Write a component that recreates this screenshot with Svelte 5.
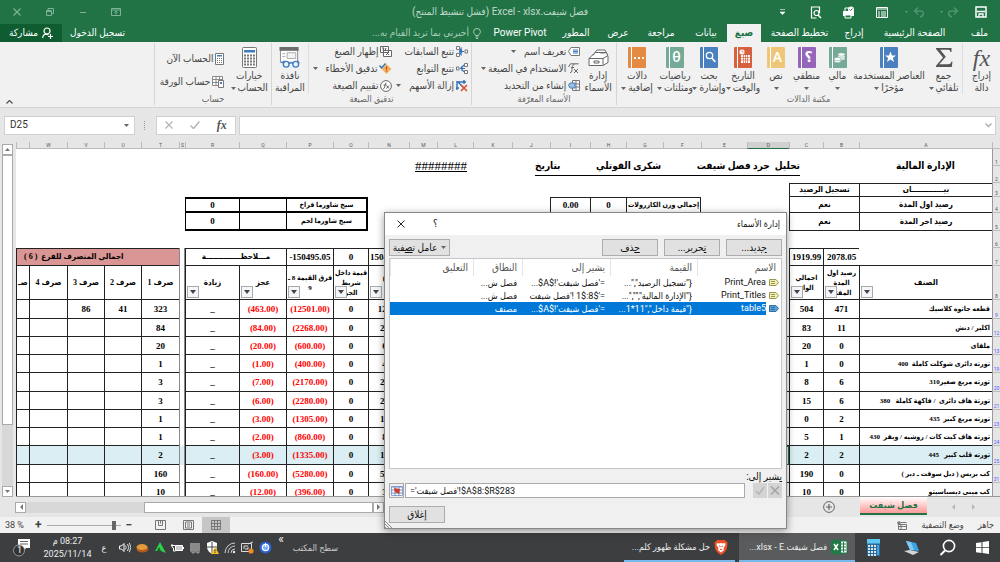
<script lang="ts">
  interface Column {
    id: string;
    width: number;
  }

  interface Item {
    name: string;
    opening: string;
    incoming: string;
    sales: string;
    diff: string;
    short: string;
    out: string[];
    current?: boolean;
    row?: number;
  }

  const columns: Column[] = [
    { id: '', width: 8 },
    { id: 'A', width: 133 },
    { id: 'B', width: 36 },
    { id: 'C', width: 34 },
    { id: 'D', width: 42 },
    { id: 'E', width: 46 },
    { id: 'F', width: 38 },
    { id: 'G', width: 37 },
    { id: 'H', width: 36 },
    { id: 'I', width: 40 },
    { id: 'J', width: 38 },
    { id: 'K', width: 39 },
    { id: 'L', width: 36 },
    { id: 'M', width: 28 },
    { id: 'N', width: 41 },
    { id: 'O', width: 35 },
    { id: 'P', width: 47 },
    { id: 'Q', width: 47 },
    { id: 'R', width: 54 },
    { id: 'S', width: 6 },
    { id: 'T', width: 38 },
    { id: 'U', width: 37 },
    { id: 'V', width: 37 },
    { id: 'W', width: 38 },
    { id: '', width: 13 }
  ];
  const totalWidth = columns.reduce((sum, c) => sum + c.width, 0);

  const items: Item[] = [
    { row: 9, name: 'قطعه جاتوه كلاسيك', opening: '471', incoming: '504', sales: '12501', diff: '(12501.00)', short: '(463.00)', out: ['323', '41', '86'] },
    { row: 12, name: 'اكلير / دنش', opening: '11', incoming: '83', sales: '2268', diff: '(2268.00)', short: '(84.00)', out: ['84', '', ''] },
    { row: 13, name: 'ملفاى', opening: '0', incoming: '20', sales: '600', diff: '(600.00)', short: '(20.00)', out: ['20', '', ''] },
    { row: 19, name: 'تورته دائرى شوكلت كاملة  400', opening: '0', incoming: '1', sales: '400', diff: '(400.00)', short: '(1.00)', out: ['1', '', ''] },
    { row: 20, name: 'تورته مربع صغير310', opening: '6', incoming: '8', sales: '2170', diff: '(2170.00)', short: '(7.00)', out: ['3', '', ''] },
    { row: 21, name: 'تورتة هاف دائرى  / فاكهة كاملة   380', opening: '6', incoming: '15', sales: '2280', diff: '(2280.00)', short: '(6.00)', out: ['3', '', ''] },
    { row: 23, name: 'تورته مربع كبير  435', opening: '2', incoming: '0', sales: '1305', diff: '(1305.00)', short: '(3.00)', out: ['1', '', ''] },
    { row: 24, name: 'تورته هاف كيت كات / روشيه / ويفر  430', opening: '1', incoming: '5', sales: '860', diff: '(860.00)', short: '(2.00)', out: ['1', '', ''] },
    { row: 25, name: 'تورته قلب كبير   445', opening: '2', incoming: '2', sales: '1335', diff: '(1335.00)', short: '(3.00)', out: ['2', '', ''], current: true },
    { row: 31, name: 'كب بريس ( دبل سوفت ـ دبر )', opening: '0', incoming: '190', sales: '5280', diff: '(5280.00)', short: '(160.00)', out: ['160', '', ''] },
    { name: 'كب مينى ديسباسيتو', opening: '0', incoming: '10', sales: '396', diff: '(396.00)', short: '(12.00)', out: ['10', '', ''] }
  ];

  const tabs = ['ملف', 'الصفحة الرئيسية', 'إدراج', 'تخطيط الصفحة', 'صيغ', 'بيانات', 'مراجعة', 'عرض', 'المطور', 'Power Pivot'];
  let activeTab = $state('صيغ');

  const books = [
    { kind: 'star', color: '#4a80bd', lines: ['العناصر المستخدمة', 'مؤخرًا'] },
    { kind: 'coins', color: '#75aa97', lines: ['مالي', ''] },
    { kind: '؟', color: '#9465b8', lines: ['منطقي', ''] },
    { kind: 'A', color: '#efc577', lines: ['نص', ''] },
    { kind: 'date', color: '#d8603f', lines: ['التاريخ', 'والوقت'] },
    { kind: 'find', color: '#4a80bd', lines: ['بحث', 'وإشارة'] },
    { kind: 'θ', color: '#75aa97', lines: ['رياضيات', 'ومثلثات'] },
    { kind: 'dots', color: '#e58a42', lines: ['دالات', 'إضافية'] }
  ];

  // \u2066 and \u2069 keep the row range together inside the right-to-left cell
  const names = [
    { name: 'Print_Area', value: '{"تسجيل الرصيد","...', refers: "='فصل شيفت'!$A$...", scope: 'فصل ش...' },
    { name: 'Print_Titles', value: '{"الإدارة المالية","","...', refers: "='\u20661$:8$\u2069 !'فصل شيفت", scope: 'فصل ش...' },
    { name: 'table5', value: '{"قيمة داخل","11*1...', refers: "='فصل شيفت'!$A$...", scope: 'مصنف' }
  ];
  let selected = $state('table5');
  let refersTo = $state("='فصل شيفت'!$A$8:$R$283");
  let cellName = $state('D25');
  let formula = $state('');
  let zoom = $state(38);
</script>

{#snippet caret()}
  <svg class="caret" width="5" height="3" viewBox="0 0 5 3"><path d="M0 0h5L2.500 3z" fill="#666" /></svg>
{/snippet}

{#snippet book(kind: string, color: string)}
  <svg width="18" height="21" viewBox="0 0 18 21">
    <rect width="18" height="21" rx="1" fill={color} />
    <path d="M3.500 0v21" stroke="#fff" stroke-width="1" />
    {#if kind === 'star'}
      <path d="M10.500 4.500l1.500 4h4l-3.200 2.500 1.200 4-3.500-2.400L7 15l1.200-4L5 8.500h4z" fill="#fff" />
    {:else if kind === 'coins'}
      <g fill="#fff" stroke={color} stroke-width=".6">
        <ellipse cx="12.500" cy="11.500" rx="3.500" ry="1.700" /><ellipse cx="12.500" cy="9.500" rx="3.500" ry="1.700" />
        <ellipse cx="12.500" cy="7.500" rx="3.500" ry="1.700" /><ellipse cx="8.500" cy="14" rx="3.500" ry="1.700" />
        <ellipse cx="8.500" cy="12" rx="3.500" ry="1.700" />
      </g>
    {:else if kind === 'date'}
      <path d="M7 8h9v8H7z" fill="#fff" />
      <path d="M9.500 8v8M11.500 8v8M13.500 8v8M7 10.500h9M7 13h9" stroke={color} stroke-width=".7" />
      <circle cx="8" cy="5" r="2.800" fill="#fff" stroke={color} stroke-width=".5" />
      <path d="M8 3.500V5h1.500" stroke={color} stroke-width=".7" fill="none" />
    {:else if kind === 'find'}
      <circle cx="9.500" cy="8.500" r="3.200" fill="none" stroke="#fff" stroke-width="1.300" />
      <path d="M11.800 11l3.500 4" stroke="#fff" stroke-width="1.700" />
    {:else if kind === 'dots'}
      <path d="M6 10h2v2H6zM10 10h2v2h-2zM14 10h2v2h-2z" fill="#fff" />
    {:else}
      <text x="10.500" y="15" text-anchor="middle" font-size="14" font-weight="600" fill="#fff" font-family="Open Sans, DejaVu Sans, sans-serif">{kind}</text>
    {/if}
  </svg>
{/snippet}

{#snippet filter()}
  <button class="filter" aria-label="تصفية"><svg width="6" height="4" viewBox="0 0 6 4"><path d="M0 0h6L3 4z" fill="#444" /></svg></button>
{/snippet}

<div class="window" dir="rtl">
  <header>
    <div class="titlebar">
      <div class="quick">
        <button aria-label="حفظ"><svg width="12" height="12" viewBox="0 0 12 12"><path d="M1 1h10v10H1z" fill="none" stroke="#fff" stroke-width="1.500" /><path d="M2 5.500h8M4 11V8h4v3" stroke="#fff" stroke-width="1.300" fill="none" /></svg></button>
        <button aria-label="إعادة"><svg width="22" height="12" viewBox="0 0 22 12"><path d="M3 5h3L4.500 7z" fill="#5f9f7c" /><path d="M20 5h-5c-5 0-4 5 0 6M17 1.500L20.500 5 17 8.500" fill="none" stroke="#4f9570" stroke-width="1.400" /></svg></button>
        <button aria-label="تراجع"><svg width="22" height="12" viewBox="0 0 22 12"><path d="M1 5h3L2.500 7z" fill="#5f9f7c" /><path d="M11 5h5c5 0 4 5 0 6M14 1.500L10.500 5 14 8.500" fill="none" stroke="#4f9570" stroke-width="1.400" /></svg></button>
        <button aria-label="نموذج"><svg width="12" height="11" viewBox="0 0 12 11"><path d="M.5.500h11v10H.5z" fill="none" stroke="#fff" /><path d="M0 2h12M2 5h2M5 5h5M2 7h2M5 7h5M2 9h2M5 9h5" stroke="#fff" /></svg></button>
        <button aria-label="طباعة سريعة"><svg width="13" height="13" viewBox="0 0 13 13"><path d="M1 5h11v5H1z" fill="#fff" /><path d="M3 5V2h4M3 9h6v3H3z" fill="#217346" stroke="#fff" /><circle cx="9" cy="3.500" r="3" fill="#fff" /><path d="M7.500 3.500l1 1 2-2" stroke="#217346" fill="none" /></svg></button>
        <button aria-label="معاينة"><svg width="12" height="13" viewBox="0 0 12 13"><path d="M9.500 7V1H1.500v11h5" fill="none" stroke="#fff" stroke-width="1.200" /><circle cx="6.500" cy="7" r="2.500" fill="none" stroke="#fff" stroke-width="1.200" /><path d="M8 9l3 3" stroke="#fff" stroke-width="1.500" /></svg></button>
        <button aria-label="تخصيص"><svg width="5" height="6" viewBox="0 0 5 6"><path d="M0 .5h5M0 3h5L2.500 5.500z" stroke="#fff" stroke-width=".6" fill="#fff" /></svg></button>
      </div>
      <h1>فصل شيفت.xlsx -&rlm; Excel (فشل تنشيط المنتج)</h1>
      <div class="controls">
        <button aria-label="خيارات الشريط"><svg width="10" height="8" viewBox="0 0 10 8"><path d="M.5.500h9v7h-9zM.5 2h9M5 6.500V3.500M3.500 4.500L5 3l1.500 1.500" fill="none" stroke="#7fb396" /></svg></button>
        <button aria-label="تصغير"><svg width="8" height="8" viewBox="0 0 8 8"><path d="M1 4.500h6" stroke="#7fb396" /></svg></button>
        <button aria-label="استعادة"><svg width="8" height="8" viewBox="0 0 8 8"><path d="M.5 2.500h5v5h-5zM2 2V.5h5.500v5H6M.5 3.500h5" fill="none" stroke="#7fb396" /></svg></button>
        <button aria-label="إغلاق"><svg width="8" height="8" viewBox="0 0 8 8"><path d="M.5.500l7 7M7.500.500l-7 7" stroke="#7fb396" stroke-width="1.200" /></svg></button>
      </div>
    </div>
    <nav class="tabs">
      {#each tabs as tab}
        <button class:active={tab === activeTab} onclick={() => (activeTab = tab)}>{tab}</button>
      {/each}
      <button class="tell">
        <svg width="8" height="11" viewBox="0 0 8 11"><path d="M2.500 7.500C2 6 .6 5.500.6 3.600a3.400 3.100 0 0 1 6.800 0C7.400 5.500 6 6 5.500 7.500zM2.500 9h3M3 10.500h2" fill="none" stroke="#b5d3c2" stroke-width=".9" /></svg>
        أخبرني بما تريد القيام به...
      </button>
      <button class="sign">تسجيل الدخول</button>
      <button class="share">
        <svg width="11" height="12" viewBox="0 0 11 12"><circle cx="5" cy="4" r="3" fill="none" stroke="#fff" stroke-width="1.200" /><path d="M.6 11C1 8.500 2.500 7.200 4.500 7.200L6.500 8M8.500 7v5M6 9.500h5" fill="none" stroke="#fff" stroke-width="1.200" /></svg>
        مشاركة
      </button>
    </nav>
  </header>

  <section class="ribbon">
    <div class="group library">
      <div class="tools">
        <button class="big">
          <span class="fx">fx</span>
          <span>إدراج</span><span>دالة</span>
        </button>
        <button class="big edge">
          <svg width="18" height="21" viewBox="0 0 18 21"><path d="M1 1h15.500v4h-1c-.3-1.800-1-2.300-3-2.300H5.200l5.600 7.100-6.500 7.500h8.500c2.200 0 3-.6 3.700-2.700h1L16.800 20H1v-1.200l7-8.300-7-8.600z" fill="#555" /></svg>
          <span>جمع</span><span>تلقائي {@render caret()}</span>
        </button>
        {#each books as b}
          <button class="big">
            {@render book(b.kind, b.color)}
            <span>{b.lines[0]}</span><span>{b.lines[1]} {@render caret()}</span>
          </button>
        {/each}
      </div>
      <div class="caption">مكتبة الدالات</div>
    </div>

    <div class="group names">
      <div class="tools">
        <button class="big">
          <svg width="21" height="20" viewBox="0 0 21 20"><path d="M1 11l5-5h13l1 3v6l-5 3H1z" fill="#fff" stroke="#666" /><path d="M1 11h14v7M15 11l5-3M5 8l2-3h11M7 5l2-2.500h8l2 4" fill="#fff" stroke="#666" /><path d="M6 13.500h5v2H6z" fill="none" stroke="#666" /></svg>
          <span>إدارة</span><span>الأسماء</span>
        </button>
        <div class="stack">
          <button><svg width="12" height="11" viewBox="0 0 12 11"><path d="M.5 5.500L3 1.500h8.500v8H3z" fill="#fff" stroke="#777" /><path d="M5 4h5M5 5.500h5M5 7h5" stroke="#3f7cbf" /></svg>تعريف اسم <i>{@render caret()}</i></button>
          <button><svg width="12" height="11" viewBox="0 0 12 11"><path d="M.5 4L2.500.8h8M6.500 1.500c-2-.5-2 2-2.500 5 0 2-.5 3.500-2 3M3 4.500h3M6 6l4 4M10 6l-4 4" fill="none" stroke="#666" /></svg>الاستخدام في الصيغة {@render caret()}</button>
          <button><svg width="12" height="11" viewBox="0 0 12 11"><path d="M4.500.500h7v10h-7zM4.500 4h7M4.500 7h7M8 .5v10" fill="#fff" stroke="#777" /><path d="M.5 5L2 3h5v5H2z" fill="#9dbfe2" stroke="#4a7fb8" /></svg>إنشاء من التحديد</button>
        </div>
      </div>
      <div class="caption">الأسماء المعرّفة</div>
    </div>

    <div class="group audit">
      <div class="tools">
        <div class="stack">
          <button><svg width="12" height="11" viewBox="0 0 12 11"><path d="M.5.500h3v3h-3zM.5 7.500h3v3h-3zM9 4h2.500v3H9z" fill="#fff" stroke="#777" /><path d="M8 5.500H4M5.500 3.500v4M5.500 1.500L3.500 5.500l2 4" stroke="#2f6fb5" stroke-width="1.200" fill="none" /></svg>تتبع السابقات</button>
          <button><svg width="12" height="11" viewBox="0 0 12 11"><path d="M8.500.500h3v3h-3zM8.500 7.500h3v3h-3zM.5 4H3v3H.5z" fill="#fff" stroke="#777" /><path d="M8 2L5 5l3 4M6 3v5M4 5.500h5" stroke="#2f6fb5" stroke-width="1.200" fill="none" /></svg>تتبع التوابع</button>
          <button><svg width="12" height="12" viewBox="0 0 12 12"><path d="M1 1v9M1 2h9M2 2l5 5M8 0v4M0 8h3" stroke="#2f6fb5" stroke-width="1.400" fill="none" /><path d="M5 5l6 6M11 5l-6 6" stroke="#d8502f" stroke-width="1.600" /></svg>إزالة الأسهم <i>{@render caret()}</i></button>
        </div>
        <div class="stack">
          <button><svg width="12" height="11" viewBox="0 0 12 11"><path d="M.5.500h8v6h-8zM3.500 4.500h8v6h-8z" fill="#fff" stroke="#666" /><path d="M2 2h2l-1 3M6 2L5 5M6 6l3 3M9 6L6 9" stroke="#555" fill="none" /></svg>إظهار الصيغ</button>
          <button><svg width="13" height="11" viewBox="0 0 13 11"><path d="M7.500 1l5 5-5 5-5-5z" fill="#f0b35c" /><path d="M7.500 3.500v3M7.500 7.500v1" stroke="#c33" stroke-width="1.200" /><path d="M.5 2.500L2.500 5l4-4.500" fill="none" stroke="#2f6fb5" stroke-width="1.400" /></svg>تدقيق الأخطاء <i>{@render caret()}</i></button>
          <button><svg width="12" height="12" viewBox="0 0 12 12"><circle cx="6" cy="6" r="5.400" fill="#fff" stroke="#666" /><path d="M6.500 3C4.500 2.500 5.500 9 3 8.800M3.500 5h3M6.500 5.500l2.500 3M9 5.500l-2.500 3" fill="none" stroke="#555" stroke-width=".9" /></svg>تقييم الصيغة</button>
        </div>
        <button class="big watch">
          <svg width="22" height="22" viewBox="0 0 22 22"><path d="M1 1h18v15H1z" fill="#fff" stroke="#888" /><path d="M0 0h20v4H0z" fill="#6b6b6b" /><path d="M3 7h3M3 10h3M8 6h9v6H8z" stroke="#aaa" fill="#f4f4f4" /><path d="M3 17l2-3M19 14l2 3" stroke="#3f7cbf" /><circle cx="7" cy="18" r="3" fill="#e9f2fb" stroke="#3f7cbf" stroke-width="1.400" /><circle cx="17" cy="18" r="3" fill="#e9f2fb" stroke="#3f7cbf" stroke-width="1.400" /><path d="M10 17.500q2-1.500 4 0M1.500 16h4" stroke="#3f7cbf" stroke-width="1.300" fill="none" /></svg>
          <span>نافذة</span><span>المراقبة</span>
        </button>
      </div>
      <div class="caption">تدقيق الصيغة</div>
    </div>

    <div class="group calc">
      <div class="tools">
        <button class="big">
          <svg width="15" height="21" viewBox="0 0 15 21"><rect x=".5" y=".5" width="14" height="20" rx="1" fill="#fff" stroke="#777" /><path d="M2 3h11v2.500H2z" fill="#3f7cbf" /><path d="M2 8.500h11M2 11.500h11M2 14.500h11M2 17.500h11" stroke="#777" stroke-width="2" stroke-dasharray="2 1" /></svg>
          <span>خيارات</span><span>الحساب {@render caret()}</span>
        </button>
        <div class="stack tall">
          <button><svg width="9" height="12" viewBox="0 0 9 12"><path d="M.5.500h8v11h-8z" fill="#fff" stroke="#777" /><path d="M2 2h5v1.500H2z" fill="#3f7cbf" /><path d="M2 5.500h5M2 7.500h5M2 9.500h5" stroke="#777" stroke-dasharray="1 1" /></svg>الحساب الآن</button>
          <button><svg width="12" height="12" viewBox="0 0 12 12"><path d="M.5.500h10v9H.5zM.5 3.500h10M.5 6.500h10M4 .5v9M7.500.500v9" fill="#fff" stroke="#888" /><path d="M6.500 4.500h5v7h-5z" fill="#fff" stroke="#777" /><path d="M8 6h2v2H8z" fill="#3f7cbf" /></svg>حساب الورقة</button>
        </div>
      </div>
      <div class="caption">حساب</div>
    </div>
    <button class="collapse" aria-label="طي الشريط"><svg width="7" height="4" viewBox="0 0 7 4"><path d="M.5 3.500l3-3 3 3" fill="none" stroke="#555" stroke-width="1.300" /></svg></button>
  </section>

  <section class="formulabar" dir="ltr">
    <label class="namebox"><input bind:value={cellName} aria-label="مربع الاسم" />{@render caret()}</label>
    <span class="grip"></span>
    <div class="fxbox">
      <button aria-label="إلغاء"><svg width="8" height="8" viewBox="0 0 8 8"><path d="M.5.500l7 7M7.500.500l-7 7" stroke="#b5b5b5" stroke-width="1.300" /></svg></button>
      <button aria-label="إدخال"><svg width="10" height="8" viewBox="0 0 10 8"><path d="M.5 4.500l3 3 6-7" fill="none" stroke="#b5b5b5" stroke-width="1.500" /></svg></button>
      <button class="fxsmall">fx</button>
    </div>
    <label class="formula"><input bind:value={formula} aria-label="شريط الصيغة" /><svg width="7" height="5" viewBox="0 0 7 5"><path d="M.5.500l3 3 3-3" fill="none" stroke="#aaa" stroke-width="1.400" /></svg></label>
  </section>

  <section class="workbook">
    <div class="sheet">
      <table>
        <colgroup>
          {#each columns as c}
            <col style="width: {(c.width / totalWidth) * 100}%" />
          {/each}
        </colgroup>
        <thead>
          <tr class="letters">
            {#each columns as c}
              <th class:picked={c.id === 'D'}>{c.id}</th>
            {/each}
          </tr>
        </thead>
        <tbody>
          <tr class="r17">
            <th>1</th>
            <td rowspan="2" class="heading">الإدارة المالية</td>
            <td></td>
            <td colspan="8" rowspan="2" class="title"><div><span>تحليل&nbsp; جرد فصل شيفت</span><span>شكرى القوتلي</span><span>بتاريخ</span></div></td>
            <td></td>
            <td colspan="2" rowspan="2" class="hash"><u>########</u></td>
            <td colspan="11"></td>
          </tr>
          <tr class="r17"><th>2</th><td></td><td></td><td colspan="11"></td></tr>
          <tr class="r14">
            <th>3</th>
            <td class="b t">بيـــــــــــــان</td>
            <td class="b t" colspan="2">تسجيل الرصيد</td>
            <td colspan="21"></td>
          </tr>
          <tr class="r16">
            <th>4</th>
            <td class="b">رصيد اول المدة</td>
            <td class="b" colspan="2">نعم</td>
            <td colspan="2"></td>
            <td class="b t e s" colspan="2">إجمالي وزن الكازرولات</td>
            <td class="b t num">0</td>
            <td class="b t num">0.00</td>
            <td colspan="5"></td>
            <td class="h ht he s" colspan="2">سيخ شاورما فراخ</td>
            <td class="h ht"></td>
            <td class="h ht num">0</td>
            <td colspan="6"></td>
          </tr>
          <tr class="r18">
            <th>5</th>
            <td class="b">رصيد اخر المدة</td>
            <td class="b" colspan="2">نعم</td>
            <td colspan="11"></td>
            <td class="h he s" colspan="2">سيخ شاورما لحم</td>
            <td class="h"></td>
            <td class="h num">0</td>
            <td colspan="6"></td>
          </tr>
          <tr class="r17"><th>6</th><td colspan="24"></td></tr>
          <tr class="r18">
            <th>7</th>
            <td class="b under"></td>
            <td class="b t num">2078.05</td>
            <td class="b t num">1919.99</td>
            <td colspan="10"></td>
            <td class="b t num">150495.05</td>
            <td class="b t num">0</td>
            <td class="b t num">-150495.05</td>
            <td class="b t" colspan="2">مـــلاحظــــــــــــــة</td>
            <td class="gap"></td>
            <td class="b t pink" colspan="5">اجمالي المنصرف للفرع&nbsp; ( 6 )</td>
          </tr>
          <tr class="heads">
            <th>8</th>
            <td class="b">الصنف{@render filter()}</td>
            <td class="b s">رصيد اول<br />المدة<br />المفتر{@render filter()}</td>
            <td class="b s">اجمالي<br />الوار{@render filter()}</td>
            <td colspan="10"></td>
            <td class="b s">مباع<br />11{@render filter()}</td>
            <td class="b s">قيمة داخل<br />شريط<br />الجر{@render filter()}</td>
            <td class="b s">فرق القيمة 8 ـ<br />9{@render filter()}</td>
            <td class="b">عجز{@render filter()}</td>
            <td class="b">زيادة{@render filter()}</td>
            <td class="gap"></td>
            <td class="b">صرف 1</td>
            <td class="b">صرف 2</td>
            <td class="b">صرف 3</td>
            <td class="b">صرف 4</td>
            <td class="b">صـ</td>
          </tr>
          {#each items as item}
            <tr class="item" class:current={item.current}>
              <th>{item.row ?? ''}</th>
              <td class="b name">{item.name}</td>
              <td class="b num">{item.opening}</td>
              <td class="b num">{item.incoming}</td>
              <td class="b" class:cursor={item.current}></td>
              <td class="b" colspan="9"></td>
              <td class="b num">{item.sales}</td>
              <td class="b num">0</td>
              <td class="b num red">{item.diff}</td>
              <td class="b num red">{item.short}</td>
              <td class="b num">_</td>
              <td class="gap"></td>
              {#each item.out as value}
                <td class="b num">{value}</td>
              {/each}
              <td class="b"></td>
              <td class="b"></td>
            </tr>
          {/each}
        </tbody>
      </table>
    </div>
    <div class="vscroll">
      <button aria-label="أعلى"><svg width="5" height="3" viewBox="0 0 5 3"><path d="M0 3h5L2.500 0z" fill="#777" /></svg></button>
      <span class="thumb"></span>
      <span class="track"></span>
      <button aria-label="أسفل"><svg width="5" height="3" viewBox="0 0 5 3"><path d="M0 0h5L2.500 3z" fill="#777" /></svg></button>
    </div>
  </section>

  <section class="sheetbar">
    <div class="sheetnav">
      <button aria-label="السابق"><svg width="4" height="6" viewBox="0 0 4 6"><path d="M0 0v6l3-3z" fill="#b5b5b5" /></svg></button>
      <button aria-label="التالي"><svg width="4" height="6" viewBox="0 0 4 6"><path d="M4 0v6L1 3z" fill="#b5b5b5" /></svg></button>
    </div>
    <button class="sheettab">فصل شيفت</button>
    <button class="add" aria-label="ورقة جديدة"><svg width="12" height="12" viewBox="0 0 12 12"><circle cx="6" cy="6" r="5.400" fill="none" stroke="#666" /><path d="M6 3v6M3 6h6" stroke="#666" stroke-width="1.200" /></svg></button>
    <div class="hscroll">
      <button aria-label="يمين"><svg width="4" height="6" viewBox="0 0 4 6"><path d="M0 0v6l3-3z" fill="#777" /></svg></button>
      <span class="thumb"></span>
      <span class="track"></span>
      <button aria-label="يسار"><svg width="4" height="6" viewBox="0 0 4 6"><path d="M4 0v6L1 3z" fill="#777" /></svg></button>
    </div>
  </section>

  <section class="status">
    <span>جاهز</span>
    <span>وضع التصفية</span>
    <svg width="10" height="9" viewBox="0 0 10 9"><path d="M1.500 3.500h8v5h-8zM4 1.500h5.500M1.500 5.500h8M4 3.500v5" fill="none" stroke="#777" /><circle cx="2" cy="2" r="1.800" fill="#777" /></svg>
    <div class="views">
      <button class="on" aria-label="عادي"><svg width="10" height="10" viewBox="0 0 10 10"><path d="M.5.500h9v9h-9zM.5 3.500h9M.5 6.500h9M3.500.500v9M6.500.500v9" fill="none" stroke="#777" /></svg></button>
      <button aria-label="تخطيط"><svg width="11" height="10" viewBox="0 0 11 10"><path d="M.5.500h10v9H.5zM2.500 2h6v6h-6zM4 4h3M4 6h3" fill="none" stroke="#777" /></svg></button>
      <button aria-label="فواصل"><svg width="11" height="10" viewBox="0 0 11 10"><path d="M.5.500h10v9H.5zM3.500.500v5h4v-5M5.500.500v3" fill="none" stroke="#777" /></svg></button>
    </div>
    <div class="zoomer" dir="ltr">
      <output>{zoom} %</output>
      <b>+</b>
      <input type="range" min="10" max="400" dir="rtl" bind:value={zoom} aria-label="تكبير" />
      <b>−</b>
    </div>
  </section>

  <footer class="taskbar">
    <button aria-label="ابدأ"><svg width="13" height="13" viewBox="0 0 13 13"><path d="M0 2l5.500-.8v5H0zM6.500 1L13 0v6.200H6.500zM0 7h5.500v5L0 11.200zM6.500 7H13v6l-6.500-1z" fill="#fff" /></svg></button>
    <button aria-label="بحث"><svg width="17" height="17" viewBox="0 0 17 17"><circle cx="10" cy="7" r="5.600" fill="none" stroke="#fff" stroke-width="1.600" /><path d="M6 11.500L1.500 16" stroke="#fff" stroke-width="2" /></svg></button>
    <button aria-label="سطح المكتب"><svg width="17" height="16" viewBox="0 0 17 16"><path d="M3 1l10 2 3 8-9-1z" fill="#39a5e6" /><path d="M3 1l5 1 3 8-4 0z" fill="#7fcaf5" /><path d="M1 11l6-1 9 2-6 3z" fill="#cfd6dc" /></svg></button>
    <button aria-label="الحاسبة"><svg width="13" height="17" viewBox="0 0 13 17"><path d="M0 0h13v17H0z" fill="#2a6a99" /><path d="M0 0h13v4.500H0z" fill="#5cc8f2" /><path d="M1 7h8M1 10h8M1 13h8M1 16h8" stroke="#d6e6f0" stroke-width="2" stroke-dasharray="2 1" /><path d="M10 6h2v10h-2z" fill="#4aa3dc" /></svg></button>
    <button class="app excel"><svg width="17" height="16" viewBox="0 0 17 16"><path d="M9 2h7v12H9z" fill="#fff" stroke="#1f7a45" /><path d="M10 5h5M10 8h5M10 11h5M12.500 3v10" stroke="#1f7a45" /><path d="M0 1.500L10 0v16L0 14.500z" fill="#1f7a45" /><path d="M3 5l4 6M7 5l-4 6" stroke="#fff" stroke-width="1.500" /></svg><span>فصل شيفت.xlsx - E...</span></button>
    <button class="app"><svg width="14" height="16" viewBox="0 0 14 16"><path d="M3 1h8l1 1.500 1.500.5-.5 6c-.5 3-3 5-6 7-3-2-5.500-4-6-7L.5 3 2 2.500z" fill="#f0502a" /><path d="M3 4l2 .5L7 4l2 .5L11 4l.5 2-2 3 .5 2-3 2.500L4 11l.5-2-2-3z" fill="#fff" /><path d="M5 7l1.500.5M9 7l-1.500.5M6 10l1 .8 1-.8" stroke="#f0502a" /></svg><span>حل مشكلة ظهور كلم...</span></button>
    <span class="desk">سطح المكتب</span>
    <button class="more" aria-label="المزيد">»</button>
    <div class="tray">
      <svg width="13" height="13" viewBox="0 0 13 13"><circle cx="6.500" cy="6.500" r="6" fill="#2c62d6" /><circle cx="6.500" cy="6.500" r="3.200" fill="#7fb0ff" stroke="#fff" stroke-width="1.200" /><path d="M6.500 2v4" stroke="#fff" /></svg>
      <svg width="13" height="13" viewBox="0 0 13 13"><path d="M.5 2.500h10v8H.5zM3 8V5h4M4 8h3V6" fill="none" stroke="#ddd" /><path d="M7 3l5-2" stroke="#ddd" /><circle cx="10" cy="10" r="2.600" fill="#f08a24" /></svg>
      <svg width="12" height="12" viewBox="0 0 12 12"><path d="M1 11A10 10 0 0 1 11 1M4 11a7 7 0 0 1 7-7M7 11a4 4 0 0 1 4-4" fill="none" stroke="#ccc" /><circle cx="10" cy="10" r="1.200" fill="#eee" /></svg>
      <svg width="13" height="13" viewBox="0 0 13 13"><path d="M6 0l5 2v4c0 3-2 5-5 7-3-2-5-4-5-7V2z" fill="#fff" /><path d="M6 1v11M1 6h10" stroke="#444" /><path d="M9 6l4 7H5z" fill="#f6c02c" /><path d="M9 8.500v2M9 11.200v.8" stroke="#333" /></svg>
      <svg width="12" height="12" viewBox="0 0 12 12"><path d="M1 1h10v8H1z" fill="#8a8a8a" /><path d="M1 9h2v2h2v-1h3v1h2V9" fill="#6f6f6f" stroke="#999" /></svg>
      <svg width="13" height="10" viewBox="0 0 13 10"><path d="M4.500 2.500h7v5h-7z" fill="#ccc" stroke="#fff" /><path d="M12.500 4v2M0 2.500h4M1 1v3l1.500 1V8h2" fill="none" stroke="#fff" /></svg>
      <svg width="12" height="12" viewBox="0 0 12 12"><path d="M6 0l6 11-5-2H1L0 11z" fill="#2fcf4c" /><path d="M5 5l2 4H3z" fill="#126a25" /></svg>
      <svg width="13" height="10" viewBox="0 0 13 10"><ellipse cx="6.500" cy="6" rx="6" ry="3.500" fill="#b35b1d" /><ellipse cx="6" cy="4" rx="5.500" ry="3" fill="#e39a3c" /></svg>
      <svg width="12" height="11" viewBox="0 0 12 11"><path d="M.5 4h2L5 1.500v8L2.500 7h-2z" fill="none" stroke="#fff" /><path d="M6.500 3.500q1.500 2 0 4M8.500 2q2.500 3.500 0 7M10.300.800q3 4.700 0 9.400" fill="none" stroke="#ddd" /></svg>
    </div>
    <span class="lang">ع</span>
    <time><span>08:27 م</span><span>2025/11/14</span></time>
    <button class="notify" aria-label="الإشعارات"><svg width="18" height="19" viewBox="0 0 18 19"><path d="M5 1h12v9h-4l-2 3v-3H5z" fill="#fff" /><path d="M7 3.500h8M7 6h8" stroke="#666" /><circle cx="6" cy="12.500" r="5.500" fill="#333" stroke="#999" /></svg><em>1</em></button>
  </footer>

  <div class="dialog" role="dialog" aria-label="إدارة الأسماء">
    <div class="dialogtitle">
      <h2>إدارة الأسماء</h2>
      <button>؟</button>
      <button aria-label="إغلاق"><svg width="8" height="8" viewBox="0 0 8 8"><path d="M.5.500l7 7M7.500.500l-7 7" stroke="#222" /></svg></button>
    </div>
    <div class="dialogbody">
      <div class="actions">
        <button><span><u>ج</u>ديد...</span></button>
        <button><span><u>ت</u>حرير...</span></button>
        <button><span><u>ح</u>ذف</span></button>
        <button class="filtering"><span>عامل ت<u>ص</u>فية</span>{@render caret()}</button>
      </div>
      <div class="list">
        <table>
          <colgroup><col class="c1" /><col class="c2" /><col class="c3" /><col class="c4" /><col /></colgroup>
          <thead>
            <tr><th>الاسم</th><th>القيمة</th><th>يشير إلى</th><th>النطاق</th><th>التعليق</th></tr>
          </thead>
          <tbody>
            {#each names as n}
              <tr class:selected={n.name === selected} onclick={() => (selected = n.name)}>
                <td><div class="tag"><svg width="10" height="7" viewBox="0 0 10 7"><path d="M.5.500H7L9.500 3.500 7 6.500H.5z" fill={n.name === selected ? '#5fa0d8' : '#f2efb5'} stroke={n.name === selected ? '#2f6f9f' : '#9a9650'} /><path d="M2 2.500h4M2 4.500h4" stroke={n.name === selected ? '#2f6f9f' : '#9a9650'} /></svg><span dir="ltr">{n.name}</span></div></td>
                <td>{n.value}</td>
                <td>{n.refers}</td>
                <td>{n.scope}</td>
                <td></td>
              </tr>
            {/each}
          </tbody>
        </table>
      </div>
      <label class="reflabel" for="refers"><u>ي</u>شير إلى:</label>
      <div class="refrow">
        <button class="mini" aria-label="إلغاء"><svg width="10" height="9" viewBox="0 0 10 9"><path d="M1 .5l8 8M9 .5l-8 8" stroke="#a5a5a5" stroke-width="1.600" /></svg></button>
        <button class="mini" aria-label="موافق"><svg width="10" height="9" viewBox="0 0 10 9"><path d="M1 5l3 3 5-7" fill="none" stroke="#b5b5b5" stroke-width="1.600" /></svg></button>
        <input id="refers" dir="ltr" bind:value={refersTo} />
        <button class="pick" aria-label="تحديد نطاق"><svg width="12" height="10" viewBox="0 0 12 10"><path d="M.5.500h11v9H.5z" fill="#fff" stroke="#8fa8d0" /><path d="M0 1h12M0 4h12M0 7h12M4 1v9M8 1v9" stroke="#6f8fc8" /><path d="M3 2l6 1-1 5-4-2z" fill="#d23a2a" /></svg></button>
      </div>
      <button class="close">إغلاق</button>
    </div>
    <svg class="resize" width="7" height="7" viewBox="0 0 7 7"><path d="M0 0l7 7M0 3l4 4M0 6l1 1" stroke="#888" /></svg>
  </div>
</div>

<style>
  :global(body) {
    margin: 0;
  }

  .window {
    --green: #217346;
    --ui: Roboto, 'Open Sans', 'DejaVu Sans Condensed', 'DejaVu Sans', sans-serif;
    position: relative;
    display: flex;
    flex-direction: column;
    height: 100vh;
    overflow: hidden;
    background: #e6e6e6;
    color: #444;
    font-family: var(--ui);
    font-size: 10px;
    line-height: 12px;
  }

  button,
  input {
    font: inherit;
    color: inherit;
    border: 0;
    background: none;
    padding: 0;
    margin: 0;
    min-width: 0;
  }

  button {
    display: flex;
    align-items: center;
    justify-content: center;
    white-space: nowrap;
  }

  svg {
    display: block;
    flex-shrink: 0;
  }

  header {
    background: var(--green);
    color: #fff;
  }

  .titlebar {
    display: grid;
    grid-template-columns: 1fr auto 1fr;
    align-items: center;
    height: 24px;
  }

  .titlebar h1 {
    margin: 0;
    font-size: 10px;
    font-weight: 400;
    color: #c0d9cb;
  }

  .quick {
    display: flex;
    padding-right: 3px;
  }

  .quick button,
  .controls button {
    width: 33px;
  }

  .controls {
    display: flex;
    justify-content: flex-end;
  }

  .tabs {
    display: grid;
    grid-template-columns: 41fr 89fr 32fr 77fr 34fr 42fr 48fr 38fr 46fr 66fr 121fr 233fr 71fr 62fr;
    height: 18px;
  }

  .tabs button.active {
    background: #f1f1f1;
    color: var(--green);
    font-weight: 600;
  }

  .tabs .tell {
    gap: 4px;
    color: #a9ccb8;
  }

  .tabs .sign {
    grid-column: 13;
  }

  .tabs .share {
    gap: 4px;
    background: #0e5c2f;
  }

  .ribbon {
    display: grid;
    grid-template-columns: 384fr 145fr 200fr 117fr 154fr;
    height: 66px;
    background: #f1f1f1;
    border-bottom: 1px solid #d2d2d2;
    box-sizing: border-box;
  }

  .group {
    display: flex;
    flex-direction: column;
    min-width: 0;
    margin: 1px 0 2px;
    border-left: 1px solid #d5d5d5;
  }

  .tools {
    display: grid;
    flex: 1;
  }

  .library .tools {
    grid-template-columns: 37fr 38fr 72fr 31fr 31fr 30fr 36fr 32fr 36fr 40fr;
  }

  .names .tools {
    grid-template-columns: 36fr 109fr;
  }

  .audit .tools {
    grid-template-columns: 76fr 87fr 37fr;
  }

  .calc .tools {
    grid-template-columns: 44fr 73fr;
  }

  .caption {
    font-size: 9px;
    line-height: 11px;
    text-align: center;
    color: #666;
  }

  .big {
    flex-direction: column;
    justify-content: flex-start;
    padding-top: 4px;
  }

  .big > span {
    display: flex;
    align-items: center;
    gap: 2px;
    height: 12px;
  }

  .big > svg,
  .big > .fx {
    height: 21px;
    margin-bottom: 2px;
  }

  .big > .fx,
  .fxsmall {
    font-family: 'Liberation Serif', serif;
    font-style: italic;
    font-size: 24px;
    line-height: 20px;
    color: #555;
  }

  .fxsmall {
    font-size: 12px;
    font-weight: 700;
  }

  .edge,
  .watch {
    border-right: 1px solid #dedede;
  }

  .stack {
    display: flex;
    flex-direction: column;
    min-width: 0;
  }

  .stack button {
    justify-content: flex-start;
    gap: 2px;
    height: 17px;
    padding-right: 3px;
  }

  .names .stack button {
    padding-right: 0;
  }

  .stack i {
    margin-right: 6px;
  }

  .stack.tall {
    padding-top: 4px;
  }

  .stack.tall button {
    height: 23px;
  }

  .collapse {
    align-self: end;
    justify-self: end;
    padding: 3px 6px;
  }

  .formulabar {
    display: flex;
    align-items: center;
    gap: 3px;
    height: 34px;
    padding: 0 4px;
  }

  .namebox,
  .fxbox,
  .formula {
    display: flex;
    align-items: center;
    box-sizing: border-box;
    height: 19px;
    background: #fff;
    border: 1px solid #d0d0d0;
  }

  .namebox {
    width: 131px;
    padding: 0 5px;
    color: #333;
  }

  .namebox input,
  .formula input {
    flex: 1;
    width: 0;
  }

  .grip {
    width: 2px;
    height: 9px;
    margin: 0 6px;
    border-left: 1px dotted #999;
  }

  .fxbox {
    width: 80px;
    justify-content: space-around;
  }

  .formula {
    flex: 1;
    padding: 0 3px;
  }

  .workbook {
    display: flex;
    flex: 1;
    min-height: 0;
  }

  .sheet {
    flex: 1;
    min-width: 0;
    overflow: hidden;
    background: #fff;
    border-bottom: 1px solid #999;
  }

  .sheet table {
    width: 100%;
    table-layout: fixed;
    border-spacing: 0;
    color: #000;
    font-family: 'Liberation Serif', 'DejaVu Sans Condensed', serif;
    font-weight: 700;
    font-size: 8px;
    line-height: 10px;
  }

  .sheet td,
  .sheet th {
    position: relative;
    box-sizing: border-box;
    padding: 0;
    overflow: hidden;
    text-align: center;
    white-space: nowrap;
  }

  .sheet th {
    background: #e6e6e6;
    border-bottom: 1px solid #bbb;
    border-left: 1px solid #999;
    font-family: var(--ui);
    font-size: 5px;
    font-weight: 400;
    line-height: 6px;
    color: #555;
    vertical-align: bottom;
  }

  .letters th {
    height: 7px;
    border-left-color: #bbb;
  }

  .letters th.picked {
    background: #d0d0d0;
    border-bottom-color: var(--green);
  }

  .r14 {
    height: 14px;
  }

  .r16 {
    height: 16px;
  }

  .r17 {
    height: 17px;
  }

  .r18 {
    height: 18px;
  }

  .heads {
    height: 34px;
  }

  .item {
    height: 18px;
  }

  .item:nth-child(4n + 1) {
    height: 19px;
  }

  .item th {
    color: #55f;
  }

  .sheet .b {
    border-left: 1px solid #222;
    border-bottom: 1px solid #222;
  }

  .sheet .under {
    border-left: 0;
  }

  .sheet .t {
    border-top: 1px solid #222;
  }

  .sheet .e {
    border-right: 1px solid #222;
  }

  .sheet .h {
    border-left: 1px solid #000;
    border-bottom: 2px solid #000;
  }

  .sheet .ht {
    border-top: 2px solid #000;
  }

  .sheet .he {
    border-right: 2px solid #000;
  }

  .sheet .s {
    font-size: 7px;
  }

  .sheet .num {
    direction: ltr;
    font-size: 9px;
  }

  .sheet .red {
    color: #f00;
  }

  .sheet .name {
    padding-right: 2px;
    text-align: right;
    font-size: 7px;
    white-space: pre;
  }

  .sheet .gap {
    border-left: 1px solid #888;
    border-right: 1px solid #888;
  }

  .sheet .pink {
    padding-left: 7px;
    background: #da9694;
    text-align: left;
  }

  .current td {
    background: #daeef3;
  }

  .sheet .current .cursor {
    border: 1px solid var(--green);
  }

  .sheet .heading {
    font-size: 10px;
  }

  .sheet .title {
    padding: 0 23px;
    font-size: 10px;
    line-height: 18px;
  }

  .title div {
    display: flex;
    justify-content: space-between;
    border-bottom: 1px solid #000;
  }

  .sheet .hash {
    font-size: 13px;
    font-weight: 400;
    line-height: 20px;
  }

  .filter {
    position: absolute;
    left: 1px;
    bottom: 1px;
    width: 12px;
    height: 12px;
    box-sizing: border-box;
    background: #f4f6f9;
    border: 1px solid #aaa;
  }

  .vscroll {
    display: flex;
    flex-direction: column;
    width: 11px;
    margin: 2px 3px 0 2px;
    background: #d8d8d8;
  }

  .vscroll button,
  .hscroll button {
    box-sizing: border-box;
    height: 11px;
    background: #fff;
    border: 1px solid #aaa;
  }

  .vscroll .thumb {
    flex: 271;
    background: #fff;
    border: 1px solid #aaa;
  }

  .vscroll .track {
    flex: 62;
  }

  .sheetbar {
    display: grid;
    grid-template-columns: 73fr 67fr 63fr 413fr 384fr;
    height: 20px;
    align-items: center;
  }

  .sheetnav {
    display: flex;
    justify-content: center;
    gap: 17px;
  }

  .sheettab {
    align-self: start;
    height: 18px;
    background: linear-gradient(#fff, #f99);
    border-bottom: 2px solid var(--green);
    color: var(--green);
    font-size: 9px;
    font-weight: 700;
  }

  .hscroll {
    display: flex;
    grid-column: 5;
    height: 11px;
    margin-left: 15px;
    background: #d8d8d8;
  }

  .hscroll button {
    width: 11px;
  }

  .hscroll .thumb {
    flex: 230;
    background: #fff;
    border: 1px solid #aaa;
    box-sizing: border-box;
  }

  .hscroll .track {
    flex: 120;
  }

  .status {
    display: flex;
    align-items: center;
    gap: 14px;
    height: 16px;
    padding: 0 6px 0 5px;
    background: #f1f1f1;
    font-size: 9px;
  }

  .views {
    display: flex;
    align-self: stretch;
    margin-right: auto;
  }

  .views button {
    width: 28px;
  }

  .views .on {
    background: #c6c6c6;
  }

  .zoomer {
    display: flex;
    align-items: center;
    gap: 5px;
  }

  .zoomer output {
    width: 25px;
  }

  .zoomer b {
    font-size: 12px;
  }

  .zoomer input {
    appearance: none;
    width: 74px;
    height: 9px;
    background: linear-gradient(#aaa, #aaa) center / 100% 1px no-repeat;
  }

  .zoomer input::-webkit-slider-thumb {
    appearance: none;
    width: 4px;
    height: 9px;
    background: #666;
  }

  .taskbar {
    display: grid;
    grid-template-columns: 35fr 35fr 38fr 37fr 116fr 4fr 111fr 286fr 50fr 14fr 158fr 24fr 49fr 43fr;
    align-items: center;
    height: 29px;
    background: #3c3e40;
    color: #eee;
    font-size: 9px;
  }

  .app {
    box-sizing: border-box;
    height: 29px;
    gap: 4px;
    justify-content: flex-start;
    padding-right: 7px;
    border-bottom: 2px solid #76b9ed;
  }

  .app + .app {
    grid-column: 7;
  }

  .excel {
    background: #595b5d;
  }

  .desk {
    grid-column: 9;
    color: #ccc;
    white-space: nowrap;
  }

  .more {
    align-self: start;
    font-size: 12px;
  }

  .tray {
    display: flex;
    align-items: center;
    justify-content: space-around;
  }

  .lang {
    text-align: center;
  }

  time {
    display: flex;
    flex-direction: column;
    align-items: center;
    gap: 1px;
  }

  .notify {
    position: relative;
  }

  .notify em {
    position: absolute;
    left: 17px;
    bottom: 1px;
    font-style: normal;
    color: #fff;
  }

  .dialog {
    position: absolute;
    top: 212px;
    left: 38.400%;
    width: 403px;
    box-sizing: border-box;
    background: #f0f0f0;
    border: 1px solid #888;
    box-shadow: 0 2px 8px rgba(0, 0, 0, 0.4);
    color: #111;
  }

  .dialogtitle {
    display: flex;
    align-items: center;
    gap: 28px;
    height: 22px;
    padding: 0 6px 0 12px;
    background: #fff;
  }

  .dialogtitle h2 {
    flex: 1;
    margin: 0;
    font-size: 9px;
    font-weight: 400;
  }

  .dialogbody {
    padding: 4px 4px 5px;
  }

  .actions {
    display: flex;
    gap: 6px;
    margin-bottom: 2px;
  }

  .actions button,
  .close {
    box-sizing: border-box;
    width: 56px;
    height: 17px;
    background: #e1e1e1;
    border: 1px solid #adadad;
  }

  .actions .filtering {
    flex-direction: row-reverse;
    gap: 4px;
    width: 61px;
    margin-right: auto;
  }

  .list {
    height: 211px;
    box-sizing: border-box;
    background: #fff;
    border: 1px solid #c4c6cc;
  }

  .list table {
    width: 100%;
    table-layout: fixed;
    border-spacing: 0;
  }

  .c1 {
    width: 84px;
  }

  .c2 {
    width: 87px;
  }

  .c3 {
    width: 88px;
  }

  .c4 {
    width: 49px;
  }

  .list th {
    height: 17px;
    padding: 0 5px;
    border-left: 1px solid #e5e5e5;
    font-weight: 400;
    text-align: right;
    color: #555;
  }

  .list td {
    height: 13px;
    padding: 0 5px;
    white-space: nowrap;
    font-size: 9px;
  }

  .list td:first-child {
    padding: 0 2px 0 0;
  }

  .tag {
    display: flex;
    align-items: center;
    gap: 3px;
  }

  .tag span {
    flex: 1;
    line-height: 13px;
    text-align: right;
  }

  .selected td:not(:first-child),
  .selected .tag span {
    background: #0078d7;
    color: #fff;
  }

  .reflabel {
    display: block;
    margin-top: 2px;
    line-height: 12px;
  }

  .refrow {
    display: flex;
    gap: 1px;
    margin-bottom: 8px;
  }

  .mini {
    width: 14px;
    background: #d4d4d4;
  }

  .refrow input {
    flex: 1;
    height: 13px;
    margin-right: 7px;
    padding-left: 4px;
    background: #fff;
    border: 1px solid #aaa;
    font-size: 9px;
  }

  .pick {
    width: 15px;
    border: 1px solid #aaa;
  }

  .close {
    margin-right: auto;
  }

  .resize {
    position: absolute;
    left: 0;
    bottom: 0;
  }
</style>
